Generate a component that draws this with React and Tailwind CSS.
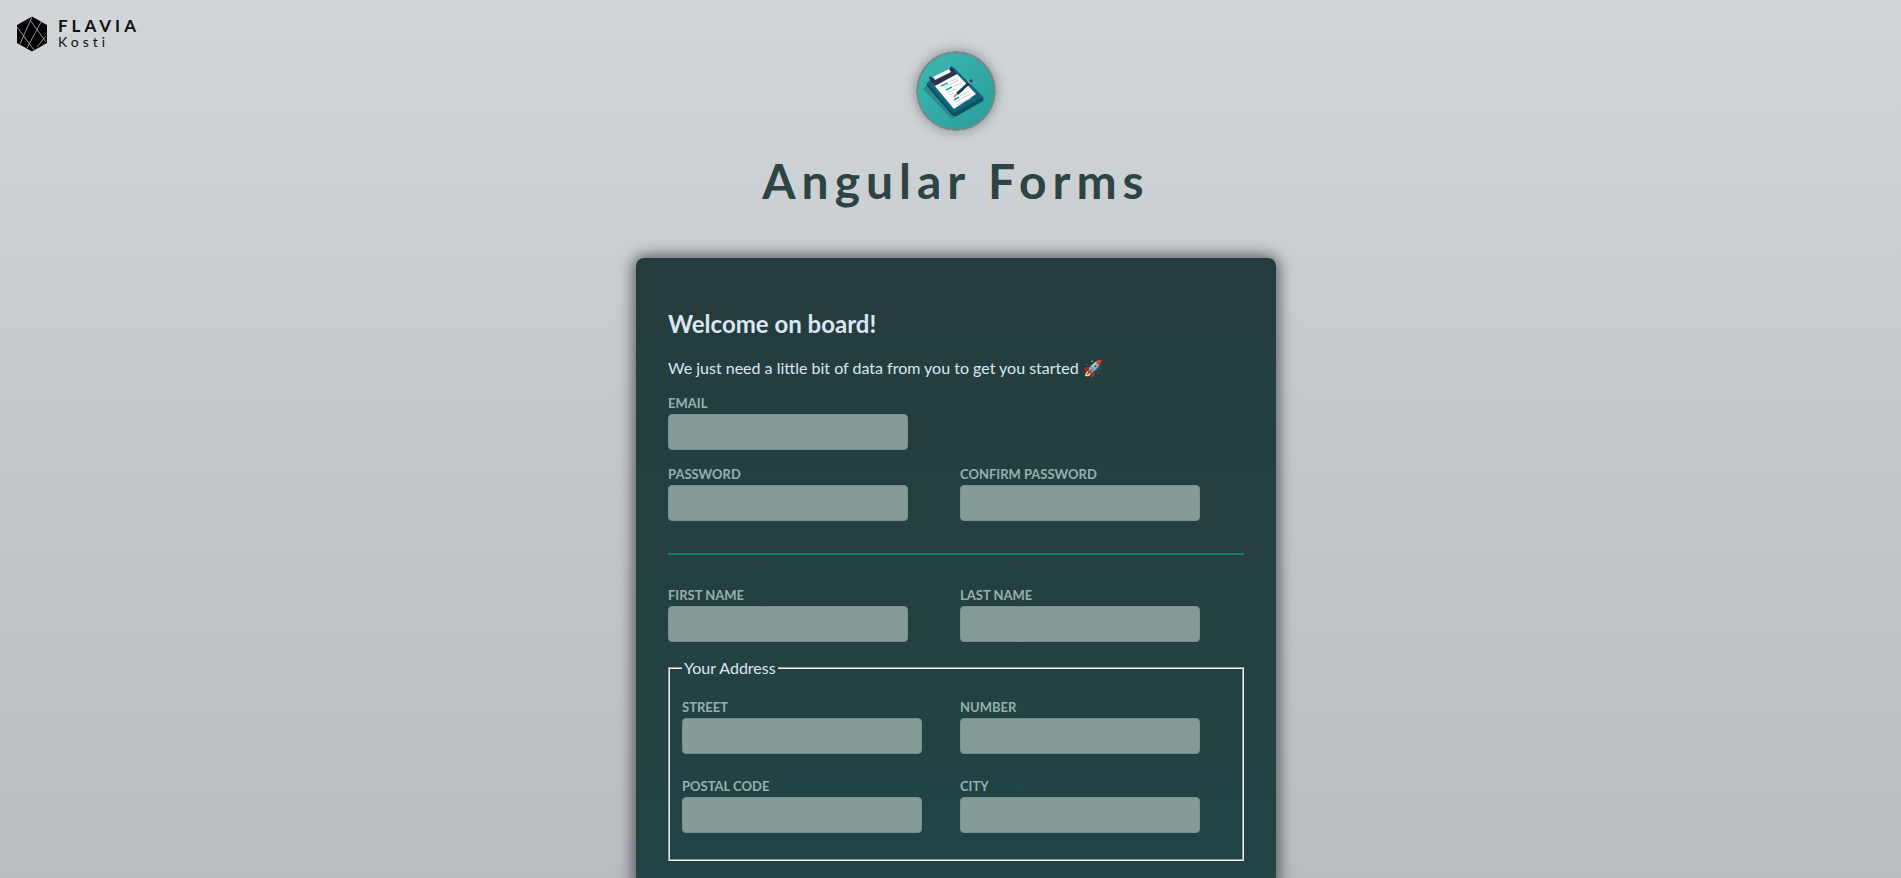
import React from "react";

function HexLogo() {
  return (
    <svg viewBox="0 0 32 36" className="h-9 w-8" aria-hidden="true">
      <path d="M16 0.5 31 9v18L16 35.5 1 27V9z" fill="#000" />
      <g stroke="#b4b9bc" strokeWidth="0.8" fill="none">
        <path d="M16 1 4 28M14 4 30 26M1 11 18 34M25 6 11 32M30 20 21 31" />
      </g>
    </svg>
  );
}

function ClipboardBadge() {
  return (
    <svg
      viewBox="0 0 80 80"
      className="size-20 rounded-full shadow-[0_0_12px_1px_rgba(0,0,0,0.3)]"
      role="img"
      aria-label="Forms clipboard"
    >
      <defs>
        <linearGradient id="badge" x1="0" y1="0" x2="1" y2="1">
          <stop offset="0" stopColor="#3bb9b4" />
          <stop offset="1" stopColor="#2a9c99" />
        </linearGradient>
      </defs>
      <circle cx="40" cy="40" r="39" fill="url(#badge)" stroke="#728a89" strokeWidth="2.4" />
      <path d="M11 34 7 38 36 68 41 65z" fill="#2b8a8b" />
      <path d="M12 31 35 17q2-1 4 1L67 46q1 2 0 4L41 65q-3 1-5-1L11 35q-1-2 1-4z" fill="#0d4f62" />
      <path d="M12 31 35 17q2-1 4 1L67 46 40 61q-3 1-5-1L12 33z" fill="#12657a" />
      <path d="M18 34 41 23 60 43 38 58z" fill="#fff" />
      <path d="M14 29 36 17 41 23 19 35z" fill="#2b3350" />
      <path d="M17 26 33 18 35 21 19 29z" fill="#f3f3f3" />
      <path d="M14 26 17 31M35 16 37 20" stroke="#2b3350" strokeWidth="2.5" fill="none" />
      <g strokeWidth="1" stroke="#c8cdd0">
        <path d="M33 31 42 27M27 37 43 29M38 35 46 32M31 42 39 38M33 44 38 42M44 45 53 40M39 51 55 43M41 54 55 47" />
      </g>
      <g strokeWidth="1.6" stroke="#2aa39c">
        <path d="M25 35 32 32M30 39 36 36M38 49 43 46" />
      </g>
      <path d="M41 43 53 32" stroke="#123c58" strokeWidth="3" />
      <path d="M38 46 41 43" stroke="#e6865a" strokeWidth="2" />
      <path d="M53 32 54 31" stroke="#d7a08c" strokeWidth="3" />
      <path d="M54 31 56 29" stroke="#33475c" strokeWidth="2.5" />
    </svg>
  );
}

function Field({ id, label, type = "text" }) {
  return (
    <div className="flex w-60 flex-col gap-[3px]">
      <label htmlFor={id} className="text-[13px] leading-4 font-bold text-[#96b0ae] uppercase">
        {label}
      </label>
      <input
        id={id}
        name={id}
        type={type}
        className="h-9 w-full rounded border border-[#75908d] bg-[#869a98] px-2 text-[#142020] outline-none"
      />
    </div>
  );
}

export default function App() {
  return (
    <div className="bg-linear-to-b from-[#d1d6d9] to-[#b9bcc1] font-[Lato,sans-serif]">
      <header className="flex h-[51px] items-start gap-2.5 px-4 pt-4">
        <HexLogo />
        <p className="flex flex-col text-[#111]">
          <span className="text-[17px] leading-5 font-bold tracking-[4px]">FLAVIA</span>
          <span className="text-sm leading-3 tracking-[4px]">Kosti</span>
        </p>
      </header>

      <main className="flex flex-col items-center pl-[11px]">
        <div className="flex flex-col items-center gap-5">
          <ClipboardBadge />
          <h1 className="text-5xl leading-[60px] font-bold tracking-[6px] text-[#2d4444]">
            Angular Forms
          </h1>
        </div>

        <form className="mt-[47px] w-full max-w-[640px] rounded-lg bg-linear-to-b from-[#253c3d] to-[#214444] px-8 pt-12 pb-8 text-[#dbe6f5] shadow-[0_0_16px_2px_rgba(0,0,0,0.6)]">
          <h2 className="text-2xl leading-9 font-bold">Welcome on board!</h2>
          <p className="mt-[14px] leading-6">
            We just need a little bit of data from you to get you started 🚀
          </p>
          <div className="mt-[15px]">
            <Field id="email" label="Email" type="email" />
          </div>
          <div className="mt-4 grid grid-cols-2 gap-x-2">
            <Field id="password" label="Password" type="password" />
            <Field id="confirm-password" label="Confirm Password" type="password" />
          </div>
          <hr className="my-8 border-t-2 border-[#167a6e]" />
          <div className="grid grid-cols-2 gap-x-2">
            <Field id="first-name" label="First Name" />
            <Field id="last-name" label="Last Name" />
          </div>
          <fieldset className="mt-[15px] border-2 border-[#f0f0f0] px-3 pt-5 pb-[26px] [border-style:groove]">
            <legend className="px-0.5 leading-[22px]">Your Address</legend>
            <div className="grid grid-cols-2 gap-x-2 gap-y-6">
              <Field id="street" label="Street" />
              <Field id="number" label="Number" />
              <Field id="postal-code" label="Postal Code" />
              <Field id="city" label="City" />
            </div>
          </fieldset>
        </form>
      </main>
    </div>
  );
}
